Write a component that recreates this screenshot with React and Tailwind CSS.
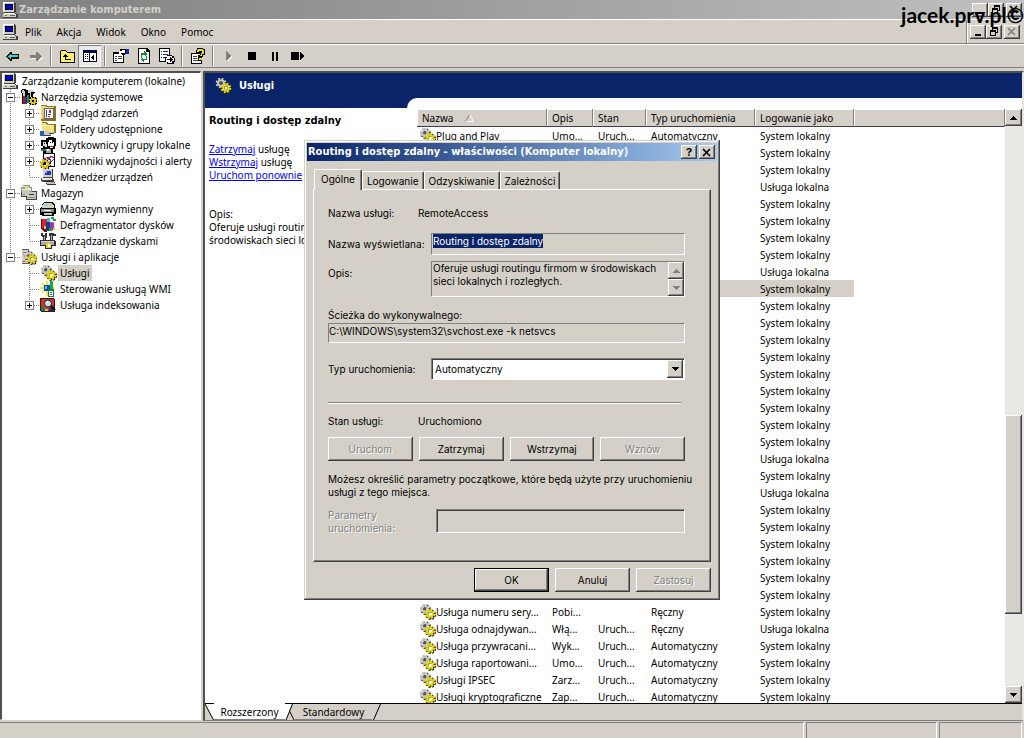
import React, { useEffect, useRef } from "react";

const RAISED =
  "bg-[#d4d0c8] shadow-[inset_-1px_-1px_#404040,inset_1px_1px_#ffffff,inset_-2px_-2px_#808080]";

/* ---------- icons ---------- */

const Computer = () => (
  <svg width="16" height="16" viewBox="0 0 16 16" shapeRendering="crispEdges" className="shrink-0">
    <path fill="#404040" d="M2 0h11v1h1v9h-1v1H2z" />
    <path fill="#d4d0c8" d="M1 0h11v10H1z" />
    <path fill="#fff" d="M1 0h11v1H2v9H1z" />
    <path fill="#000" d="M3 2h8v6H3z" />
    <path fill="#0000d8" d="M4 3h6v4H4z" />
    <path fill="#404040" d="M2 11h12v1h2v4H1v-3h1z" />
    <path fill="#d4d0c8" d="M1 12h13v3H1z" />
    <path fill="#fff" d="M2 11h11v1H2z" />
    <path fill="#00c000" d="M3 13h2v1H3z" />
    <path fill="#606060" d="M8 13h5v1H8z" />
  </svg>
);

const Gear = ({ cx, cy, color, edge, hub }) => (
  <>
    <g fill="none" stroke={edge}>
      <circle cx={cx + 0.7} cy={cy + 0.7} r="4.300" strokeWidth="2" strokeDasharray="1.900 1.480" />
      <circle cx={cx + 0.7} cy={cy + 0.7} r="3" strokeWidth="2" />
    </g>
    <g fill="none" stroke={color}>
      <circle cx={cx} cy={cy} r="4.300" strokeWidth="2" strokeDasharray="1.900 1.480" />
      <circle cx={cx} cy={cy} r="2.800" strokeWidth="2" />
    </g>
    <circle cx={cx} cy={cy} r="1.500" fill={hub} />
  </>
);

const Gears = () => (
  <svg width="17" height="16" viewBox="0 0 17 16" className="shrink-0">
    <Gear cx={6} cy={5} color="#c8c8c8" edge="#202020" hub="#505050" />
    <Gear cx={11} cy={10} color="#e6d810" edge="#101000" hub="#fff" />
  </svg>
);

const Tools = () => (
  <svg width="16" height="16" viewBox="0 0 16 16" shapeRendering="crispEdges" className="shrink-0">
    <path fill="#000" d="M1 0h3l2 2v13H1V5L0 3zM6 1h6l2 3-2 1v9H6z" />
    <path fill="#d4d0c8" d="M1 1h2l1 2v4H2V4H1zM7 1h5l1 2h-3v5H9V4H7z" />
    <path fill="#c01818" d="M2 7h2v8H2z" />
    <path fill="#109048" d="M6 6h2v8H6z" />
    <path fill="#2030a0" d="M4 8h2v7H4z" />
    <path fill="#000" d="M9 8h6v1h1v6h-1v1H9v-1H8V9h1z" />
    <path fill="#e8c800" d="M10 8h1v1h2V8h1v2h2v1h-1v2h1v1h-2v2h-1v-1h-2v1h-1v-2H8v-1h1v-2H8v-1h2z" />
    <path fill="#000" d="M11 11h2v2h-2z" />
  </svg>
);

const EventLog = () => (
  <svg width="16" height="16" viewBox="0 0 16 16" shapeRendering="crispEdges" className="shrink-0">
    <path fill="#907010" d="M1 0h5l1 1h9v15H1z" />
    <path fill="#f4e080" d="M1 1h4l1 1h8v12H1z" />
    <path fill="#606080" d="M4 3h10v11H4z" />
    <path fill="#fff" d="M5 4h8v9H5z" />
    <path fill="#2040c0" d="M6 5h1v7H6zM8 9h3v1H8z" />
    <path fill="#d02020" d="M9 5h2v3H9zM8 11h2v1H8z" />
    <path fill="#e8c860" d="M2 3h2v11H2z" />
  </svg>
);

const SharedFolder = () => (
  <svg width="16" height="16" viewBox="0 0 16 16" shapeRendering="crispEdges" className="shrink-0">
    <path fill="#907010" d="M2 1h5l1 2h8v9H2z" />
    <path fill="#f4e080" d="M2 2h4l1 2h7v7H2z" />
    <path fill="#fffac8" d="M3 4h10v1H3z" />
    <path fill="#2060b0" d="M0 10h4v5H0z" />
    <path fill="#c8c8d0" d="M4 10h5v1h5v1h-3v2H4z" />
    <path fill="#404040" d="M4 14h7v1H4zM9 12h5v1H9z" />
  </svg>
);

const Users = () => (
  <svg width="16" height="16" viewBox="0 0 16 16" shapeRendering="crispEdges" className="shrink-0">
    <path fill="#000" d="M1 3h5V1h2V0h6v1h2v8h-1v3h-2v4H3v-3H1v-2h2V9H1z" />
    <path fill="#fff" d="M9 3h3v2h2v4h-1v2h-3V9H8V5h1z" />
    <path fill="#e0e0e0" d="M3 5h3v2h1v3H5V9H3z" />
    <path fill="#000" d="M10 5h1v1h-1zM12 5h1v1h-1zM4 6h1v1H4z" />
    <path fill="#c02030" d="M10 9h3v1h-3z" />
    <path fill="#108070" d="M1 12h5v2H1z" />
    <path fill="#a0a0a0" d="M6 12h5v4H6z" />
    <path fill="#fff" d="M7 12h2v2H7z" />
  </svg>
);

const PerfLog = () => (
  <svg width="16" height="16" viewBox="0 0 16 16" shapeRendering="crispEdges" className="shrink-0">
    <path fill="#000" d="M3 0h12v14H3z" />
    <path fill="#fff" d="M4 1h10v12H4z" />
    <path fill="none" stroke="#d02020" d="M4 8l3-4 2 3 2-4 3 2" />
    <path fill="none" stroke="#2040d0" d="M4 5l2 3 3-4 2 5 3-3" />
    <Gear cx={5} cy={11} color="#d8b810" edge="#000" hub="#000" />
  </svg>
);

const DeviceManager = () => (
  <svg width="16" height="16" viewBox="0 0 16 16" shapeRendering="crispEdges" className="shrink-0">
    <path fill="#404040" d="M3 0h10v9H3z" />
    <path fill="#d4d0c8" d="M3 0h9v8H3z" />
    <path fill="#2038c0" d="M5 2h6v4H5z" />
    <path fill="#90a8ff" d="M5 2h2v2H5z" />
    <path fill="#404040" d="M1 9h12v1h1v3H2v-1H1z" />
    <path fill="#e8e8e0" d="M2 9h10v2H2z" />
    <path fill="#303030" d="M5 12h9l2 4H7z" />
    <path fill="#c0c0c0" d="M6 13h8v1H6zM7 14h8v1H7z" />
  </svg>
);

const Storage = () => (
  <svg width="16" height="16" viewBox="0 0 16 16" shapeRendering="crispEdges" className="shrink-0">
    <path fill="#404040" d="M0 4h10v8H0zM5 6h11v9H5z" />
    <path fill="#909088" d="M2 0h7v2h2v5H0V2h2z" />
    <path fill="#e8e8e8" d="M2 1h6v2h2v3H1V3h1z" />
    <path fill="#c8c8c0" d="M1 5h8v6H1zM6 7h9v7H6z" />
    <path fill="#40c060" d="M2 2h2v2H2z" />
    <path fill="#e8d040" d="M5 1h2v3H5z" />
    <path fill="#303030" d="M8 9h5v1H8z" />
    <path fill="#808080" d="M2 9h2v1H2zM7 12h7v1H7z" />
  </svg>
);

const Removable = () => (
  <svg width="16" height="16" viewBox="0 0 16 16" shapeRendering="crispEdges" className="shrink-0">
    <path fill="#000" d="M4 1h8l3 3v3h1v6h-2v2H2v-1H0V7l2-1V3z" />
    <path fill="#d0d0c8" d="M4 2h8l2 3v2H2V4z" />
    <path fill="#80d0e0" d="M5 3h3v2H5z" />
    <path fill="#e0d060" d="M9 3h2v2H9z" />
    <path fill="#909088" d="M1 8h13v3H1z" />
    <path fill="#fff" d="M4 9h7v1H4z" />
    <path fill="#c0c0b8" d="M4 12h8v2H4z" />
  </svg>
);

const Defrag = () => (
  <svg width="16" height="16" viewBox="0 0 16 16" shapeRendering="crispEdges" className="shrink-0">
    <path fill="#800010" d="M1 2h6v13H4l-3-3z" />
    <path fill="#e02030" d="M2 2h5v9H2z" />
    <path fill="#30c8c8" d="M7 1h3v4H7z" />
    <path fill="#104090" d="M6 5h4v9H6z" />
    <path fill="#a030c0" d="M10 5h4v8h-4z" />
    <path fill="#e040e0" d="M10 5h4v1h-4z" />
    <path fill="#20a030" d="M11 0h3v2h2v2h-3V2h-2zM9 11h3v3H9z" />
    <path fill="#e8d020" d="M4 9h2v3H4zM13 11h2v2h-2z" />
  </svg>
);

const DiskManage = () => (
  <svg width="16" height="16" viewBox="0 0 16 16" shapeRendering="crispEdges" className="shrink-0">
    <path fill="#303030" d="M1 0h2v2h2V0h2v4L6 5v4H3V5L1 3zM9 0h5v1h2v2h-3v6h-3V3H9z" />
    <path fill="#b0b0b0" d="M4 3h1v5H4zM11 2h1v6h-1z" />
    <path fill="#303030" d="M0 7h15v1h1v5h-4v3H5v-3H0z" />
    <path fill="#a8a8a0" d="M1 8h13v4H1z" />
    <path fill="#d8d8d0" d="M1 8h13v1H1z" />
    <path fill="#e8d020" d="M6 10h5v5H6z" />
    <path fill="#fff" d="M8 11h2v3H8z" />
  </svg>
);

const ServerGear = () => (
  <svg width="16" height="16" viewBox="0 0 16 16" className="shrink-0">
    <path fill="#606060" d="M1 0h7v2h1v13H1z" />
    <path fill="#d4d0c8" d="M1 1h6v13H1z" />
    <path fill="#808080" d="M2 3h4v1H2zM2 5h4v1H2z" />
    <path fill="#d02020" d="M2 12h2v1H2z" />
    <Gear cx={8} cy={7} color="#c8c8c8" edge="#202020" hub="#505050" />
    <Gear cx={11} cy={10} color="#e6d810" edge="#101000" hub="#fff" />
  </svg>
);

const Wmi = () => (
  <svg width="16" height="16" viewBox="0 0 16 16" className="shrink-0">
    <path stroke="#f0e010" strokeWidth="1.500" d="M0 7h15M7 0v15M2 2l10 10M12 2L2 12" />
    <path fill="#1840c0" d="M4 4h6v6H4z" />
    <path fill="#50d0e0" d="M5 5h2v3H5z" />
    <path fill="#10b030" d="M10 0h3v8h-3z" />
    <path fill="#108040" d="M8 8h6v8H8z" />
    <path fill="#fff" d="M9 10h4v5H9z" />
    <path fill="#606060" d="M10 11h2v1h-2zM10 13h2v1h-2z" />
  </svg>
);

const Indexing = () => (
  <svg width="16" height="16" viewBox="0 0 16 16" className="shrink-0">
    <path fill="#401008" d="M0 1h14v1h1v13H1v-1H0z" />
    <path fill="#d83020" d="M1 2h13v12H1z" />
    <path fill="#108060" d="M1 10h4v4H1z" />
    <path fill="#203080" d="M9 11h5v3H9z" />
    <path fill="#e8c020" d="M5 12h3v2H5z" />
    <circle cx="8" cy="6.500" r="3.500" fill="#b8e8f0" stroke="#102040" />
    <path fill="#fff" d="M6 4h2v2H6z" />
    <path fill="none" stroke="#000" strokeWidth="2" d="M11 9l4 4" />
  </svg>
);

const Tri = ({ dir = "down", color = "#000" }) => (
  <svg width="7" height="4" viewBox="0 0 7 4" shapeRendering="crispEdges">
    <path fill={color} d={dir === "up" ? "M3 0h1v1h1v1h1v1h1v1H0V3h1V2h1V1h1z" : "M0 0h7v1H6v1H5v1H4v1H3V3H2V2H1V1H0z"} />
  </svg>
);

const MinGlyph = () => (
  <svg width="10" height="9" viewBox="0 0 10 9" shapeRendering="crispEdges">
    <path fill="#000" d="M2 7h6v2H2z" />
  </svg>
);

const RestoreGlyph = () => (
  <svg width="10" height="9" viewBox="0 0 10 9" shapeRendering="crispEdges">
    <path fill="#000" d="M3 0h6v6H7V5h1V2H4v1H3zM1 3h6v6H1zM2 5v3h4V5z" fillRule="evenodd" />
  </svg>
);

const CloseGlyph = ({ color = "#000" }) => (
  <svg width="10" height="9" viewBox="0 0 10 9">
    <path stroke={color} strokeWidth="1.700" d="M1 1l7 7M8 1L1 8" />
  </svg>
);

/* ---------- data ---------- */

const tree = [
  { label: "Narzędzia systemowe", icon: Tools, box: "-", level: 1 },
  { label: "Podgląd zdarzeń", icon: EventLog, box: "+", level: 2 },
  { label: "Foldery udostępnione", icon: SharedFolder, box: "+", level: 2 },
  { label: "Użytkownicy i grupy lokalne", icon: Users, box: "+", level: 2 },
  { label: "Dzienniki wydajności i alerty", icon: PerfLog, box: "+", level: 2 },
  { label: "Menedżer urządzeń", icon: DeviceManager, level: 2, last: true },
  { label: "Magazyn", icon: Storage, box: "-", level: 1 },
  { label: "Magazyn wymienny", icon: Removable, box: "+", level: 2 },
  { label: "Defragmentator dysków", icon: Defrag, level: 2 },
  { label: "Zarządzanie dyskami", icon: DiskManage, level: 2, last: true },
  { label: "Usługi i aplikacje", icon: ServerGear, box: "-", level: 1, last: true },
  { label: "Usługi", icon: Gears, level: 2, selected: true, noTrunk: true },
  { label: "Sterowanie usługą WMI", icon: Wmi, level: 2, noTrunk: true },
  { label: "Usługa indeksowania", icon: Indexing, box: "+", level: 2, last: true, noTrunk: true },
];

const SYS = "System lokalny";
const LOC = "Usługa lokalna";

const services = [
  ["Plug and Play", "Umo...", "Uruch...", "Automatyczny", SYS],
  ["", "", "", "", SYS],
  ["", "", "", "", SYS],
  ["", "", "", "", LOC],
  ["", "", "", "", SYS],
  ["", "", "", "", SYS],
  ["", "", "", "", SYS],
  ["", "", "", "", SYS],
  ["", "", "", "", LOC],
  ["", "", "", "", SYS],
  ["", "", "", "", SYS],
  ["", "", "", "", SYS],
  ["", "", "", "", SYS],
  ["", "", "", "", SYS],
  ["", "", "", "", SYS],
  ["", "", "", "", SYS],
  ["", "", "", "", SYS],
  ["", "", "", "", SYS],
  ["", "", "", "", SYS],
  ["", "", "", "", LOC],
  ["", "", "", "", SYS],
  ["", "", "", "", LOC],
  ["", "", "", "", SYS],
  ["", "", "", "", SYS],
  ["", "", "", "", SYS],
  ["", "", "", "", SYS],
  ["", "", "", "", SYS],
  ["", "", "", "", SYS],
  ["Usługa numeru sery...", "Pobi...", "", "Ręczny", SYS],
  ["Usługa odnajdywan...", "Włą...", "Uruch...", "Ręczny", LOC],
  ["Usługa przywracani...", "Wyk...", "Uruch...", "Automatyczny", SYS],
  ["Usługa raportowani...", "Umo...", "Uruch...", "Automatyczny", SYS],
  ["Usługi IPSEC", "Zarz...", "Uruch...", "Automatyczny", SYS],
  ["Usługi kryptograficzne", "Zap...", "Uruch...", "Automatyczny", SYS],
];

const SELECTED_ROW = 9;

/* ---------- window chrome ---------- */

const WinButton = ({ label, children }) => (
  <button aria-label={label} className={`flex h-[14px] w-4 items-center justify-center ${RAISED}`}>
    {children}
  </button>
);

const TitleBar = () => (
  <header className="flex h-[19px] shrink-0 items-center bg-linear-to-r from-[#808080] to-[#c0c0c0] pr-[2px] pl-[2px]">
    <Computer />
    <h1 className="ml-px flex-1 font-['DejaVu_Sans_Condensed','DejaVu_Sans',sans-serif] text-[11px] font-bold text-[#d4d0c8]">
      Zarządzanie komputerem
    </h1>
    <WinButton label="Minimalizuj"><MinGlyph /></WinButton>
    <WinButton label="Przywróć"><RestoreGlyph /></WinButton>
    <span className="w-[2px]" />
    <WinButton label="Zamknij"><CloseGlyph /></WinButton>
  </header>
);

const MenuBar = () => (
  <nav className="flex h-[25px] shrink-0 items-center border-t border-b border-t-white border-b-[#808080] pl-[2px]">
    <Computer />
    <div className="flex flex-1 items-center gap-px">
      {["Plik", "Akcja", "Widok", "Okno", "Pomoc"].map((m) => (
        <button key={m} className="px-[7px]">{m}</button>
      ))}
    </div>
    <div className="flex h-full items-center border-l border-l-[#808080] pr-1 pl-[3px] shadow-[inset_1px_0_#ffffff]">
      <WinButton label="Minimalizuj okno"><MinGlyph /></WinButton>
      <WinButton label="Przywróć okno"><RestoreGlyph /></WinButton>
      <span className="w-[2px]" />
      <WinButton label="Zamknij okno"><CloseGlyph color="#808080" /></WinButton>
    </div>
  </nav>
);

const ToolButton = ({ label, pressed, children }) => (
  <button
    aria-label={label}
    className={`flex h-[22px] w-[23px] items-center justify-center ${
      pressed ? "bg-[#ebe9e4] shadow-[inset_1px_1px_#808080,inset_-1px_-1px_#ffffff]" : ""
    }`}
  >
    <svg width="16" height="16" viewBox="0 0 16 16" shapeRendering="crispEdges">
      {children}
    </svg>
  </button>
);

const Sep = () => <span className="mx-[3px] h-5 w-[2px] border-l border-l-[#808080] bg-white" />;

const Toolbar = () => (
  <div className="flex h-6 shrink-0 items-center border-t border-b border-t-white border-b-[#808080] pl-px">
    <ToolButton label="Wstecz">
      <path fill="#000" d="M1 8h1V7h1V6h1V5h1V4h2v2h7v5H7v2H5v-1H4v-1H3v-1H2V9H1z" />
      <path fill="#20e0e8" d="M3 8h1V7h1V6h1v1h7v2H6v2H5v-1H4V9H3z" />
    </ToolButton>
    <ToolButton label="Dalej">
      <path fill="#fff" d="M3 8h6V5h1v1h1v1h1v1h3v2h-1v1h-1v1h-1v1h-2v-2H3z" />
      <path fill="#808080" d="M2 7h6V4h2v1h1v1h1v1h1v1h1v1h-1v1h-1v1h-1v1h-1v1H8v-3H2z" />
    </ToolButton>
    <Sep />
    <ToolButton label="W górę">
      <path fill="#000" d="M1 3h1V2h5v1h1v1h8v11H1z" />
      <path fill="#fff060" d="M2 3h5v1h1v1h7v9H2z" />
      <path fill="#000" d="M6 6h1v1h1v1h1v1H7v2h5v1H6V9H4V8h1V7h1z" />
    </ToolButton>
    <ToolButton label="Pokaż drzewo" pressed>
      <path fill="#000040" d="M1 2h14v12H1z" />
      <path fill="#fff" d="M2 5h5v8H2zM8 5h6v8H8z" />
      <path fill="#000" d="M3 6h1v1H3zM5 6h1v1H5zM3 8h1v1H3zM5 8h1v1H5zM3 10h1v1H3zM5 10h1v1H5zM9 9h1V8h1V7h1v5h-1v-1h-1v-1H9z" />
    </ToolButton>
    <Sep />
    <ToolButton label="Właściwości">
      <path fill="#000" d="M0 4h11v11H0z" />
      <path fill="#fff" d="M1 6h9v8H1z" />
      <path fill="#404040" d="M2 8h2v1H2zM5 8h4v1H5zM2 10h2v1H2zM5 10h4v1H5zM2 12h2v1H2z" />
      <path fill="#000" d="M7 1h6v1h3v4h-4v1H9V6H5V4h2z" />
      <path fill="#fff" d="M6 3h3V2h3v3H8v1H6z" />
      <path fill="#1030a0" d="M13 1h3v5h-3z" />
    </ToolButton>
    <ToolButton label="Odśwież">
      <path fill="#000" d="M2 0h9l3 3v13H2z" />
      <path fill="#fff" d="M3 1h7v3h3v11H3z" />
      <path fill="#109030" d="M5 5h3V3h1v1h1v1h1v2h-1v1H9V7H6v3H5zM11 8v4H8v2H7v-1H6v-1H5v-1h1v-1h1v1h3V8z" />
    </ToolButton>
    <ToolButton label="Eksportuj listę">
      <path fill="#000" d="M0 0h11v14H0z" />
      <path fill="#fff" d="M1 1h9v12H1z" />
      <path fill="#1030a0" d="M2 3h1v1H2zM4 3h5v1H4zM2 6h1v1H2zM4 6h5v1H4zM2 9h1v1H2zM4 9h3v1H4z" />
      <path fill="#000" d="M8 7h5v1h2v2h1v4h-1v2H8v-2H6V9h2z" />
      <path fill="#fff" d="M8 8h5v2h2v3h-2v2H9v-1H7v-4h1z" />
      <path fill="#000" d="M8 11h3V9h1v1h1v1h1v1h-1v1h-1v1h-1v-2H8z" />
    </ToolButton>
    <Sep />
    <ToolButton label="Pomoc">
      <path fill="#000" d="M1 5h11v11H1z" />
      <path fill="#fff" d="M2 6h9v9H2z" />
      <path fill="#404040" d="M3 8h4v1H3zM3 10h4v1H3zM3 12h5v1H3z" />
      <path fill="#000" d="M7 0h6v1h2v6h-2v2h-1v4H8V7h2V5H6V2h1z" />
      <path fill="#f0e010" d="M8 1h5v1h1v4h-2v2h-2V7h1V5h1V3H9v1H7V2h1zM9 10h3v2H9z" />
    </ToolButton>
    <Sep />
    <ToolButton label="Uruchom usługę">
      <path fill="#fff" d="M6 4h1v1h1v1h1v1h1v1h1v2h-1v1H9v1H8v1H6z" />
      <path fill="#808080" d="M5 3h1v1h1v1h1v1h1v1h1v2H9v1H8v1H7v1H5z" />
    </ToolButton>
    <ToolButton label="Zatrzymaj usługę"><path fill="#000" d="M4 4h8v8H4z" /></ToolButton>
    <ToolButton label="Wstrzymaj usługę"><path fill="#000" d="M5 4h2v9H5zM9 4h2v9H9z" /></ToolButton>
    <ToolButton label="Uruchom usługę ponownie">
      <path fill="#000" d="M1 4h8v8H1zM10 4h1v1h1v1h1v1h1v2h-1v1h-1v1h-1v1h-1z" />
    </ToolButton>
  </div>
);

/* ---------- console tree ---------- */

const Branch = ({ box, last }) => (
  <svg width="19" height="16" viewBox="0 0 19 16" shapeRendering="crispEdges" className="shrink-0">
    <path stroke="#808080" strokeDasharray="1 1" d={last ? "M8.500 0v8" : "M8.500 0v16"} />
    <path stroke="#808080" strokeDasharray="1 1" d="M9 8.500h10" />
    {box && (
      <>
        <path fill="#fff" stroke="#808080" d="M4.500 4.500h8v8h-8z" />
        <path stroke="#000" d={box === "+" ? "M6 8.500h5M8.500 6v5" : "M6 8.500h5"} />
      </>
    )}
  </svg>
);

const Trunk = ({ hidden }) => (
  <svg width="19" height="16" viewBox="0 0 19 16" shapeRendering="crispEdges" className="shrink-0">
    {!hidden && <path stroke="#808080" strokeDasharray="1 1" d="M8.500 0v16" />}
  </svg>
);

const Tree = () => (
  <aside className="mb-px w-[201px] shrink-0 overflow-hidden border-t-2 border-r border-b border-l-2 border-t-[#505050] border-r-white border-b-white border-l-[#505050] bg-white">
    <ul>
      <li className="flex h-4 items-center">
        <Computer />
        <span className="ml-1 whitespace-nowrap">Zarządzanie komputerem (lokalne)</span>
      </li>
      {tree.map(({ label, icon: Icon, box, level, last, selected, noTrunk }) => (
        <li key={label} className="flex h-4 items-center">
          {level === 2 && <Trunk hidden={noTrunk} />}
          <Branch box={box} last={last} />
          <span className="w-4 shrink-0"><Icon /></span>
          <span className={`ml-[2px] px-[2px] leading-4 whitespace-nowrap ${selected ? "bg-[#d4d0c8]" : ""}`}>{label}</span>
        </li>
      ))}
    </ul>
  </aside>
);

/* ---------- services pane ---------- */

const ServiceInfo = () => (
  <div className="pt-[6px] pl-1 leading-[13px]">
    <h2 className="mb-4 font-['DejaVu_Sans_Condensed','DejaVu_Sans',sans-serif] text-[11px] font-bold whitespace-nowrap">
      Routing i dostęp zdalny
    </h2>
    <p><a href="#stop" className="text-[#0000ff] underline">Zatrzymaj</a> usługę</p>
    <p><a href="#pause" className="text-[#0000ff] underline">Wstrzymaj</a> usługę</p>
    <p><a href="#restart" className="text-[#0000ff] underline">Uruchom ponownie</a></p>
    <p className="mt-[26px]">Opis:</p>
    <p className="-mr-4">Oferuje usługi routingu firmom w środowiskach sieci lokalnych i rozległych.</p>
  </div>
);

const HeadCell = ({ children }) => (
  <th className="h-[18px] truncate bg-[#d4d0c8] p-0 pl-[5px] text-left font-normal shadow-[inset_-1px_0_#808080,inset_0_-1px_#404040,inset_1px_1px_#ffffff]">
    {children}
  </th>
);

const ServiceList = () => (
  <table className="w-full table-fixed border-collapse">
    <colgroup>
      <col className="w-[130px]" />
      <col className="w-[46px]" />
      <col className="w-[53px]" />
      <col className="w-[109px]" />
      <col className="w-[99px]" />
      <col />
    </colgroup>
    <thead>
      <tr>
        <HeadCell>
          <span className="flex items-center gap-3">
            Nazwa
            <svg width="9" height="8" viewBox="0 0 9 8">
              <path fill="none" stroke="#fff" d="M4.500 0.500L8.500 7.500H0.500" />
              <path fill="none" stroke="#808080" d="M4.500 0.500L0.500 7.500" />
            </svg>
          </span>
        </HeadCell>
        <HeadCell>Opis</HeadCell>
        <HeadCell>Stan</HeadCell>
        <HeadCell>Typ uruchomienia</HeadCell>
        <HeadCell>Logowanie jako</HeadCell>
        <HeadCell />
      </tr>
    </thead>
    <tbody>
      {services.map(([name, desc, state, type, account], i) => {
        const bg = i === SELECTED_ROW ? "bg-[#d4d0c8]" : "";
        return (
          <tr key={i} className="h-[17px] whitespace-nowrap">
            <td className={`p-0 pl-[2px] ${bg}`}>
              {name && <span className="flex h-[17px] items-center"><Gears />{name}</span>}
            </td>
            <td className={`p-0 pl-[5px] ${bg}`}>{desc}</td>
            <td className={`p-0 pl-[5px] ${bg}`}>{state}</td>
            <td className={`p-0 pl-[5px] ${bg}`}>{type}</td>
            <td className={`p-0 pl-[5px] ${bg}`}>{account}</td>
            <td className="p-0" />
          </tr>
        );
      })}
    </tbody>
  </table>
);

const Scrollbar = () => (
  <div className="flex w-[17px] shrink-0 flex-col bg-[#eae8e4]">
    <button aria-label="Przewiń w górę" className={`flex h-[17px] items-center justify-center ${RAISED}`}>
      <Tri dir="up" />
    </button>
    <div className="flex-[289]" />
    <div className={`flex-[199] ${RAISED}`} />
    <div className="flex-[72]" />
    <button aria-label="Przewiń w dół" className={`flex h-[17px] items-center justify-center ${RAISED}`}>
      <Tri />
    </button>
  </div>
);

const BottomTabs = () => (
  <div className="flex h-[17px] shrink-0 border-t border-t-black bg-[#d4d0c8] leading-4">
    <svg width="9" height="16" viewBox="0 0 9 16" className="shrink-0">
      <path fill="#fff" d="M0 0h9v16z" />
      <path stroke="#000" d="M0 0l8.500 16" />
    </svg>
    <button className="-mt-px w-[71px] border-t border-b border-t-white border-b-[#808080] bg-white">Rozszerzony</button>
    <svg width="10" height="16" viewBox="0 0 10 16" className="shrink-0">
      <path fill="#fff" d="M0 0h7L1 16H0z" />
      <path stroke="#000" fill="none" d="M7.500 0L1 16M4.500 7l4.500 9" />
    </svg>
    <button className="w-[77px] border-b border-b-[#808080]">Standardowy</button>
    <svg width="9" height="16" viewBox="0 0 9 16" className="shrink-0">
      <path stroke="#000" d="M8.500 0L1.500 16" />
    </svg>
  </div>
);

const ServicesPane = () => (
  <main className="flex min-w-0 flex-1 flex-col border-t-2 border-r-2 border-b border-l-2 border-t-[#505050] border-r-[#e8e6e2] border-b-[#808080] border-l-[#505050]">
    <div className="flex h-[25px] shrink-0 items-center bg-[#0a246a] pl-[10px]">
      <Gears />
      <h2 className="ml-[7px] font-['DejaVu_Sans_Condensed','DejaVu_Sans',sans-serif] text-[11px] font-bold text-white">Usługi</h2>
    </div>
    <div className="flex min-h-0 flex-1">
      <div className="w-[202px] shrink-0 overflow-hidden bg-white">
        <div className="h-[10px] bg-[#0a246a]" />
        <ServiceInfo />
      </div>
      <div className="flex min-w-0 flex-1 bg-[#0a246a]">
        <div className="flex min-w-0 flex-1 rounded-tl-[10px] bg-white pt-[11px] pl-[10px]">
          <div className="min-w-0 flex-1 overflow-hidden"><ServiceList /></div>
          <Scrollbar />
        </div>
      </div>
    </div>
    <BottomTabs />
  </main>
);

/* ---------- properties dialog ---------- */

const SUNKEN = "border border-t-[#808080] border-r-white border-b-white border-l-[#808080]";

const DialogButton = ({ children, disabled, className = "" }) => (
  <button
    disabled={disabled}
    className={`${RAISED} disabled:text-[#808080] disabled:[text-shadow:1px_1px_#ffffff] ${className}`}
  >
    {children}
  </button>
);

const DialogTabs = () => (
  <div role="tablist" className="flex h-5 items-end pl-px">
    {["Ogólne", "Logowanie", "Odzyskiwanie", "Zależności"].map((t, i) => (
      <button
        key={t}
        role="tab"
        aria-selected={i === 0}
        className={`rounded-t-[2px] border-t border-r border-l border-t-white border-r-[#404040] border-l-white bg-[#d4d0c8] shadow-[inset_-1px_0_#808080] ${
          i === 0 ? "relative -mb-px h-[21px] px-[6px] pb-[3px]" : "h-[18px] px-1"
        }`}
      >
        {t}
      </button>
    ))}
  </div>
);

const PropertiesDialog = () => {
  const nameRef = useRef(null);

  useEffect(() => {
    nameRef.current.focus();
    nameRef.current.select();
  }, []);

  return (
    <div
      role="dialog"
      aria-labelledby="dlg-title"
      className="absolute top-[140px] left-[304px] w-[416px] bg-[#d4d0c8] px-[3px] pt-[3px] pb-2 font-['Inter',sans-serif] text-[10px] shadow-[inset_-1px_-1px_#404040,inset_1px_1px_#d4d0c8,inset_-2px_-2px_#808080,inset_2px_2px_#ffffff]"
    >
      <div className="flex h-[18px] items-center gap-[2px] bg-linear-to-r from-[#0a246a] to-[#a6caf0] pr-[2px] pl-px">
        <h2 id="dlg-title" className="flex-1 font-['DejaVu_Sans_Condensed','DejaVu_Sans',sans-serif] text-[11px] font-bold whitespace-nowrap text-white">
          Routing i dostęp zdalny - właściwości (Komputer lokalny)
        </h2>
        <button aria-label="Pomoc" className={`h-[14px] w-4 text-[11px] leading-[13px] font-bold ${RAISED}`}>?</button>
        <WinButton label="Zamknij"><CloseGlyph /></WinButton>
      </div>

      <div className="mt-2 px-[6px]">
        <DialogTabs />
        <div className="border border-t-white border-r-[#404040] border-b-[#404040] border-l-white pt-[15px] pr-[25px] pb-[26px] pl-[14px] shadow-[inset_-1px_-1px_#808080]">
          <dl className="flex h-4 items-center">
            <dt className="w-[90px]">Nazwa usługi:</dt>
            <dd>RemoteAccess</dd>
          </dl>

          <div className="mt-3 flex items-center">
            <label htmlFor="display-name" className="w-[103px] shrink-0 whitespace-nowrap">Nazwa wyświetlana:</label>
            <div className={`flex h-[22px] min-w-0 flex-1 items-start ${SUNKEN}`}>
              <input
                id="display-name"
                ref={nameRef}
                readOnly
                defaultValue="Routing i dostęp zdalny"
                className="h-[14px] w-full bg-transparent pl-px leading-[14px] outline-none selection:bg-[#0a246a] selection:text-white"
              />
            </div>
          </div>

          <div className="mt-[6px] flex">
            <label htmlFor="description" className="w-[103px] shrink-0 pt-1">Opis:</label>
            <div className={`flex h-9 min-w-0 flex-1 ${SUNKEN}`}>
              <textarea
                id="description"
                readOnly
                defaultValue="Oferuje usługi routingu firmom w środowiskach sieci lokalnych i rozległych."
                className="min-w-0 flex-1 resize-none overflow-hidden bg-transparent pl-px leading-[13px] outline-none"
              />
              <div className="flex w-4 flex-col">
                <button aria-label="W górę" className={`flex flex-1 items-center justify-center ${RAISED}`}><Tri dir="up" color="#808080" /></button>
                <button aria-label="W dół" className={`flex flex-1 items-center justify-center ${RAISED}`}><Tri color="#808080" /></button>
              </div>
            </div>
          </div>

          <label htmlFor="path" className="mt-[10px] block h-4 leading-4">Ścieżka do wykonywalnego:</label>
          <div className={`flex h-5 items-start ${SUNKEN}`}>
            <input id="path" readOnly defaultValue="C:\WINDOWS\system32\svchost.exe -k netsvcs" className="h-[14px] w-full bg-transparent leading-[14px] outline-none" />
          </div>

          <div className="mt-[15px] flex items-center">
            <label htmlFor="startup" className="w-[103px] shrink-0">Typ uruchomienia:</label>
            <div className={`flex h-[22px] min-w-0 flex-1 bg-white p-px shadow-[inset_1px_1px_#404040] ${SUNKEN}`}>
              <select id="startup" className="min-w-0 flex-1 appearance-none bg-transparent pl-[2px] outline-none">
                <option>Automatyczny</option>
                <option>Ręczny</option>
                <option>Wyłączony</option>
              </select>
              <span className={`flex w-4 items-center justify-center ${RAISED}`}><Tri /></span>
            </div>
          </div>

          <hr className="mt-[22px] mr-1 h-[2px] border-t border-b border-t-[#808080] border-b-white" />

          <dl className="mt-[9px] flex h-4 items-center">
            <dt className="w-[90px]">Stan usługi:</dt>
            <dd>Uruchomiono</dd>
          </dl>

          <div className="mt-2 flex h-6 justify-between gap-[6px]">
            <DialogButton disabled className="flex-1">Uruchom</DialogButton>
            <DialogButton className="flex-1">Zatrzymaj</DialogButton>
            <DialogButton className="flex-1">Wstrzymaj</DialogButton>
            <DialogButton disabled className="flex-1">Wznów</DialogButton>
          </div>

          <p className="mt-3 -mr-3 leading-[13px]">
            Możesz określić parametry początkowe, które będą użyte przy uruchomieniu usługi z tego miejsca.
          </p>

          <div className="mt-[10px] flex items-start">
            <label htmlFor="params" className="w-[108px] shrink-0 pr-5 leading-[13px] text-[#808080] [text-shadow:1px_1px_#ffffff]">
              Parametry uruchomienia:
            </label>
            <input id="params" disabled className={`h-6 min-w-0 flex-1 bg-transparent shadow-[inset_1px_1px_#404040] ${SUNKEN}`} />
          </div>
        </div>

        <div className="mt-[6px] flex h-6 justify-end gap-[6px]">
          <DialogButton className="w-[75px] border border-black">OK</DialogButton>
          <DialogButton className="w-[75px]">Anuluj</DialogButton>
          <DialogButton disabled className="w-[75px]">Zastosuj</DialogButton>
        </div>
      </div>
    </div>
  );
};

const StatusBar = () => (
  <footer className="mt-px flex h-4 shrink-0 gap-[2px] pr-[2px]">
    <div className="flex-1 border-t border-r border-t-[#808080] border-r-white" />
    <div className="w-[131px] border-t border-r border-l border-t-[#808080] border-r-white border-l-[#808080]" />
    <div className="w-[83px] border-t border-r border-l border-t-[#808080] border-r-white border-l-[#808080]" />
  </footer>
);

export default function App() {
  return (
    <div className="relative flex h-screen flex-col overflow-hidden bg-[#d4d0c8] font-['Noto_Sans',sans-serif] text-[10px] leading-4 text-black">
      <TitleBar />
      <MenuBar />
      <Toolbar />
      <div className="mt-[3px] flex min-h-0 flex-1 gap-[2px]">
        <Tree />
        <ServicesPane />
      </div>
      <StatusBar />
      <PropertiesDialog />
      <span className="pointer-events-none absolute top-[3px] right-0 font-['Lato',sans-serif] text-[21px] leading-6 font-bold">
        jacek.prv.pl©
      </span>
    </div>
  );
}
